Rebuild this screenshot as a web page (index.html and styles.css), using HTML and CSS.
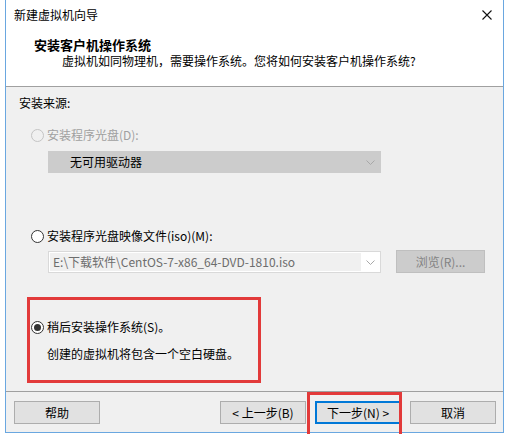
FILE: index.html
```html
<!DOCTYPE html>
<html lang="zh-CN">
<head>
<meta charset="utf-8">
<title>新建虚拟机向导</title>
<link rel="stylesheet" href="styles.css">
</head>
<body>
<div class="win">
  <div class="titlebar">
    <span class="wtitle">新建虚拟机向导</span>
    <svg class="close" width="10" height="10" viewBox="0 0 10 10"><path d="M0.5 0.5 L9.5 9.5 M9.5 0.5 L0.5 9.5" stroke="#111" stroke-width="1.1" fill="none"/></svg>
  </div>
  <div class="header">
    <div class="h1">安装客户机操作系统</div>
    <div class="h2">虚拟机如同物理机，需要操作系统。您将如何安装客户机操作系统?</div>
  </div>
  <div class="content">
    <div class="src">安装来源:</div>
    <div class="opt dis"><span class="radio"></span><span>安装程序光盘(D):</span></div>
    <div class="combo cdis">
      <span class="ctext">无可用驱动器</span>
      <svg class="chev" width="9" height="5" viewBox="0 0 9 5"><path d="M0.5 0.5 L4.5 4.5 L8.5 0.5" stroke="#a8a8a8" fill="none"/></svg>
    </div>
    <div class="opt opt2"><span class="radio"></span><span>安装程序光盘映像文件(iso)(M):</span></div>
    <div class="isorow">
      <div class="combo ciso">
        <span class="isofield">E:\下载软件\CentOS-7-x86_64-DVD-1810.iso</span>
        <svg class="chev" width="9" height="5" viewBox="0 0 9 5"><path d="M0.5 0.5 L4.5 4.5 L8.5 0.5" stroke="#a8a8a8" fill="none"/></svg>
      </div>
      <div class="btn bdis">浏览(R)...</div>
    </div>
    <div class="redbox">
      <div class="opt"><span class="radio on"></span><span>稍后安装操作系统(S)。</span></div>
      <div class="note">创建的虚拟机将包含一个空白硬盘。</div>
    </div>
  </div>
  <div class="footer">
    <div class="btn">帮助</div>
    <div class="rgroup">
      <div class="btn">&lt; 上一步(B)</div>
      <div class="btn def">下一步(N) &gt;</div>
      <div class="btn">取消</div>
    </div>
  </div>
</div>
<div class="mark"></div>
</body>
</html>
```
FILE: styles.css
```css
html, body {
  margin: 0;
  padding: 0;
}
body {
  width: 507px;
  height: 434px;
  overflow: hidden;
  background: #ffffff;
  font-family: "Noto Sans CJK SC", "Noto Sans", sans-serif;
  font-size: 12px;
  color: #000;
  position: relative;
}
.win {
  margin-left: 5px;
  width: 499px;
  height: 433px;
  box-sizing: border-box;
  border-left: 1px solid #6aa7e0;
  border-right: 1px solid #6aa7e0;
  border-bottom: 1px solid #6aa7e0;
  background: #f0f0f0;
  display: flex;
  flex-direction: column;
}
.titlebar {
  height: 30px;
  background: #fff;
  display: flex;
  align-items: center;
  justify-content: space-between;
  padding: 0 11px 0 8px;
}
.wtitle {
  line-height: 16px;
}
.header {
  height: 57px;
  box-sizing: border-box;
  background: #fff;
  border-bottom: 1px solid #a0a0a0;
  padding: 7px 0 0 28px;
}
.h1 {
  font-size: 13px;
  font-weight: bold;
  line-height: 16px;
}
.h2 {
  line-height: 16px;
  padding-left: 28px;
}
.content {
  height: 305px;
  box-sizing: border-box;
  border-bottom: 1px solid #a0a0a0;
  padding: 8px 0 0 13px;
}
.src {
  line-height: 16px;
}
.opt {
  display: flex;
  align-items: center;
  line-height: 16px;
  margin-top: 16px;
  margin-left: 12px;
}
.radio {
  width: 13px;
  height: 13px;
  box-sizing: border-box;
  border: 1px solid #333;
  border-radius: 50%;
  background: #fff;
  margin-right: 3px;
  position: relative;
}
.radio.on::after {
  content: "";
  position: absolute;
  left: 2px;
  top: 2px;
  width: 7px;
  height: 7px;
  border-radius: 50%;
  background: #333;
}
.opt.dis {
  color: #a0a0a0;
}
.opt.dis .radio {
  border-color: #c4c4c4;
  background: #f0f0f0;
}
.combo {
  margin-left: 29px;
  width: 333px;
  height: 22px;
  box-sizing: border-box;
  display: flex;
  align-items: center;
  justify-content: space-between;
}
.cdis {
  margin-top: 8px;
  background: #cccccc;
  border: 1px solid #cccccc;
  padding: 0 5px 0 21px;
}
.ctext {
  line-height: 16px;
}
.opt2 {
  margin-top: 55px;
}
.isorow {
  display: flex;
  align-items: flex-start;
  margin-top: 6px;
  margin-left: 29px;
}
.ciso {
  margin: 1px 0 0 0;
  background: #fff;
  border: 1px solid #d9d9d9;
  padding: 1px 5px 1px 1px;
}
.isofield {
  width: 311px;
  height: 18px;
  line-height: 18px;
  box-sizing: border-box;
  background: #f0f0f0;
  color: #6d6d6d;
  padding-left: 3px;
  white-space: nowrap;
  overflow: hidden;
}
.btn {
  width: 86px;
  height: 22px;
  box-sizing: border-box;
  border: 1px solid #adadad;
  background: #e1e1e1;
  display: flex;
  align-items: center;
  justify-content: center;
  line-height: 16px;
}
.bdis {
  margin-left: 15px;
  width: 89px;
  height: 23px;
  background: #cccccc;
  border-color: #bfbfbf;
  color: #838383;
}
.redbox {
  margin-top: 24px;
  margin-left: 8px;
  width: 234px;
  height: 86px;
  box-sizing: border-box;
  border: 3px solid #e23a3a;
  padding-top: 19px;
}
.redbox .opt {
  margin: 0 0 0 1px;
}
.note {
  margin-top: 11px;
  margin-left: 17px;
  line-height: 16px;
}
.footer {
  flex: 1;
  display: flex;
  justify-content: space-between;
  align-items: flex-start;
  padding: 9px 7px 0 8px;
}
.footer .btn {
  height: 23px;
}
.rgroup {
  display: flex;
  gap: 9px;
}
.btn.def {
  border: 2px solid #0078d7;
}
.mark {
  position: absolute;
  left: 307px;
  top: 392px;
  width: 95px;
  height: 46px;
  box-sizing: border-box;
  border: 3px solid #e23a3a;
}
```
